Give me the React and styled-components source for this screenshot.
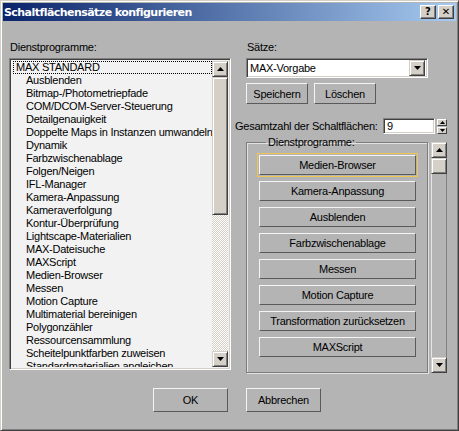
import React from 'react';
import styled, { createGlobalStyle } from 'styled-components';

const bg = '#b4b4b4';
const face = '#d4d0c8';
const listBg = '#f2f2f2';

const Global = createGlobalStyle`
  html, body { margin: 0; padding: 0; background: ${bg}; }
  * { box-sizing: border-box; }
`;

const Window = styled.div`
  width: 459px;
  height: 431px;
  display: flex;
  flex-direction: column;
  background: ${bg};
  border: 1px solid;
  border-color: ${face} #404040 #404040 ${face};
  box-shadow: inset 1px 1px #fff, inset -1px -1px #808080;
  padding: 2px;
  font-family: 'Liberation Sans', Arial, sans-serif;
  font-size: 11px;
  letter-spacing: -0.25px;
  color: #000;
`;

const TitleBar = styled.div`
  height: 18px;
  display: flex;
  align-items: center;
  justify-content: space-between;
  padding: 0 2px 0 1px;
  background: linear-gradient(to right, #0a246a, #a6caf0);
`;

const Title = styled.span`
  color: #fff;
  font-family: 'DejaVu Sans', sans-serif;
  font-weight: bold;
  font-size: 11px;
  letter-spacing: -0.55px;
`;

const TitleButtons = styled.div`
  display: flex;
  gap: 2px;
`;

const TitleButton = styled.div`
  width: 16px;
  height: 14px;
  background: ${face};
  border: 1px solid;
  border-color: #fff #404040 #404040 #fff;
  box-shadow: inset -1px -1px #808080;
  display: flex;
  align-items: center;
  justify-content: center;
  font-family: 'DejaVu Sans', sans-serif;
  font-weight: bold;
  font-size: 10px;
  letter-spacing: 0;
  line-height: 1;
`;

const Body = styled.div`
  display: grid;
  grid-template-columns: 222px 212px;
  column-gap: 4px;
  padding: 20px 0 0 6px;
`;

const Column = styled.div`
  display: flex;
  flex-direction: column;
`;

const Label = styled.div`
  height: 13px;
  line-height: 13px;
  padding-left: ${(p) => p.$indent || 1}px;
  margin-bottom: 4px;
`;

const Sunken = styled.div`
  border: 1px solid;
  border-color: #808080 #fff #fff #808080;
  box-shadow: inset 1px 1px #404040, inset -1px -1px ${face};
`;

const ListBox = styled(Sunken)`
  height: 312px;
  background: ${listBg};
  display: flex;
  padding: 2px;
`;

const ListItems = styled.div`
  flex: 1;
  overflow: hidden;
`;

const Item = styled.div`
  height: 13px;
  line-height: 13px;
  white-space: nowrap;
  overflow: hidden;
  padding-left: ${(p) => (p.$root ? 3 : 14)}px;
  outline: ${(p) => (p.$focus ? '1px dotted #000' : 'none')};
  outline-offset: -1px;
  margin-left: ${(p) => (p.$root ? 1 : 0)}px;
`;

const ScrollBar = styled.div`
  width: 16px;
  display: flex;
  flex-direction: column;
`;

const ScrollButton = styled.div`
  width: 16px;
  height: 16px;
  flex: none;
  background: ${face};
  border: 1px solid;
  border-color: ${face} #404040 #404040 ${face};
  box-shadow: inset 1px 1px #fff, inset -1px -1px #808080;
  display: flex;
  align-items: center;
  justify-content: center;
`;

const Thumb = styled(ScrollButton)`
  height: ${(p) => p.$h}px;
`;

const Track = styled.div`
  flex: 1;
  background: ${(p) =>
    p.$checker
      ? `repeating-conic-gradient(#fff 0 25%, ${face} 0 50%) 0 0 / 2px 2px`
      : bg};
  border-left: ${(p) => (p.$checker ? 'none' : '1px solid #e6e6e6')};
  border-right: ${(p) => (p.$checker ? 'none' : '1px solid #808080')};
`;

const Section = styled.div`
  display: flex;
  flex-direction: column;
  padding-left: 11px;
`;

const Combo = styled(Sunken)`
  width: 182px;
  height: 20px;
  background: #fff;
  display: flex;
  align-items: center;
  justify-content: space-between;
  padding: 2px 2px 2px 3px;
`;

const ButtonRow = styled.div`
  display: flex;
  gap: 6px;
  margin-top: 5px;
`;

const Button = styled.button`
  width: ${(p) => p.$w}px;
  height: ${(p) => p.$h || 21}px;
  padding: 0;
  background: ${bg};
  border: 1px solid;
  border-color: #f4f4f4 #5a5a5a #5a5a5a #f4f4f4;
  font: inherit;
  letter-spacing: inherit;
  color: #000;
  outline: none;
  flex: none;
`;

const FocusFrame = styled.div`
  margin: -2px 0 -2px -2px;
  width: 161px;
  padding: 1px;
  border: 1px solid #f0c650;
`;

const CountRow = styled.div`
  display: flex;
  align-items: center;
  margin-top: 14px;
  height: 16px;
`;

const CountLabel = styled.span`
  width: 148px;
`;

const CountInput = styled(Sunken)`
  width: 52px;
  height: 16px;
  background: #fff;
  line-height: 12px;
  padding: 1px 3px;
`;

const Spinner = styled.div`
  display: flex;
  flex-direction: column;
  gap: 1px;
  margin-left: 2px;
`;

const SpinHalf = styled.div`
  width: 10px;
  height: 7px;
  background: ${face};
  border: 1px solid;
  border-color: #fff #404040 #404040 #fff;
  display: flex;
  align-items: center;
  justify-content: center;
`;

const GroupRow = styled.div`
  display: flex;
  gap: 3px;
  margin-top: 8px;
  padding-left: 11px;
  height: 231px;
`;

const Group = styled.fieldset`
  width: 182px;
  margin: -6px 0 0 0;
  padding: 7px 0 0 12px;
  border: 1px solid #7c7c7c;
  box-shadow: inset 1px 1px #e2e2e2, 1px 1px #e2e2e2;
  display: flex;
  flex-direction: column;
  gap: 6px;
`;

const Legend = styled.legend`
  padding: 0 2px;
  margin-left: 7px;
  line-height: 12px;
`;

const Footer = styled.div`
  display: flex;
  gap: 18px;
  padding: 15px 0 0 150px;
`;

const Up = () => (
  <svg width="7" height="4" viewBox="0 0 7 4">
    <path d="M3.5 0 L7 4 L0 4 Z" fill="#000" />
  </svg>
);

const Down = () => (
  <svg width="7" height="4" viewBox="0 0 7 4">
    <path d="M0 0 L7 0 L3.5 4 Z" fill="#000" />
  </svg>
);

const SmallUp = () => (
  <svg width="5" height="3" viewBox="0 0 5 3">
    <path d="M2.5 0 L5 3 L0 3 Z" fill="#000" />
  </svg>
);

const SmallDown = () => (
  <svg width="5" height="3" viewBox="0 0 5 3">
    <path d="M0 0 L5 0 L2.5 3 Z" fill="#000" />
  </svg>
);

const utilities = [
  'Ausblenden',
  'Bitmap-/Photometriepfade',
  'COM/DCOM-Server-Steuerung',
  'Detailgenauigkeit',
  'Doppelte Maps in Instanzen umwandeln',
  'Dynamik',
  'Farbzwischenablage',
  'Folgen/Neigen',
  'IFL-Manager',
  'Kamera-Anpassung',
  'Kameraverfolgung',
  'Kontur-Überprüfung',
  'Lightscape-Materialien',
  'MAX-Dateisuche',
  'MAXScript',
  'Medien-Browser',
  'Messen',
  'Motion Capture',
  'Multimaterial bereinigen',
  'Polygonzähler',
  'Ressourcensammlung',
  'Scheitelpunktfarben zuweisen',
  'Standardmaterialien angleichen',
];

const slots = [
  'Medien-Browser',
  'Kamera-Anpassung',
  'Ausblenden',
  'Farbzwischenablage',
  'Messen',
  'Motion Capture',
  'Transformation zurücksetzen',
  'MAXScript',
];

const App = () => (
  <>
    <Global />
    <Window>
      <TitleBar>
        <Title>Schaltflächensätze konfigurieren</Title>
        <TitleButtons>
          <TitleButton>?</TitleButton>
          <TitleButton>✕</TitleButton>
        </TitleButtons>
      </TitleBar>

      <Body>
        <Column>
          <Label>Dienstprogramme:</Label>
          <ListBox>
            <ListItems>
              <Item $root $focus>MAX STANDARD</Item>
              {utilities.map((u) => (
                <Item key={u}>{u}</Item>
              ))}
            </ListItems>
            <ScrollBar>
              <ScrollButton><Up /></ScrollButton>
              <Thumb $h={138} />
              <Track $checker />
              <ScrollButton><Down /></ScrollButton>
            </ScrollBar>
          </ListBox>
        </Column>

        <Column>
          <Section>
            <Label $indent={0}>Sätze:</Label>
            <Combo>
              <span>MAX-Vorgabe</span>
              <ScrollButton><Down /></ScrollButton>
            </Combo>
            <ButtonRow>
              <Button $w={62}>Speichern</Button>
              <Button $w={62}>Löschen</Button>
            </ButtonRow>
          </Section>

          <CountRow>
            <CountLabel>Gesamtzahl der Schaltflächen:</CountLabel>
            <CountInput>9</CountInput>
            <Spinner>
              <SpinHalf><SmallUp /></SpinHalf>
              <SpinHalf><SmallDown /></SpinHalf>
            </Spinner>
          </CountRow>

          <GroupRow>
            <Group>
              <Legend>Dienstprogramme:</Legend>
              {slots.map((s, i) =>
                i === 0 ? (
                  <FocusFrame key={s}>
                    <Button $w={157} $h={20}>{s}</Button>
                  </FocusFrame>
                ) : (
                  <Button key={s} $w={157} $h={20}>{s}</Button>
                )
              )}
            </Group>
            <ScrollBar>
              <ScrollButton><Up /></ScrollButton>
              <Thumb $h={16} />
              <Track />
              <ScrollButton><Down /></ScrollButton>
            </ScrollBar>
          </GroupRow>
        </Column>
      </Body>

      <Footer>
        <Button $w={75} $h={24}>OK</Button>
        <Button $w={75} $h={24}>Abbrechen</Button>
      </Footer>
    </Window>
  </>
);

export default App;
